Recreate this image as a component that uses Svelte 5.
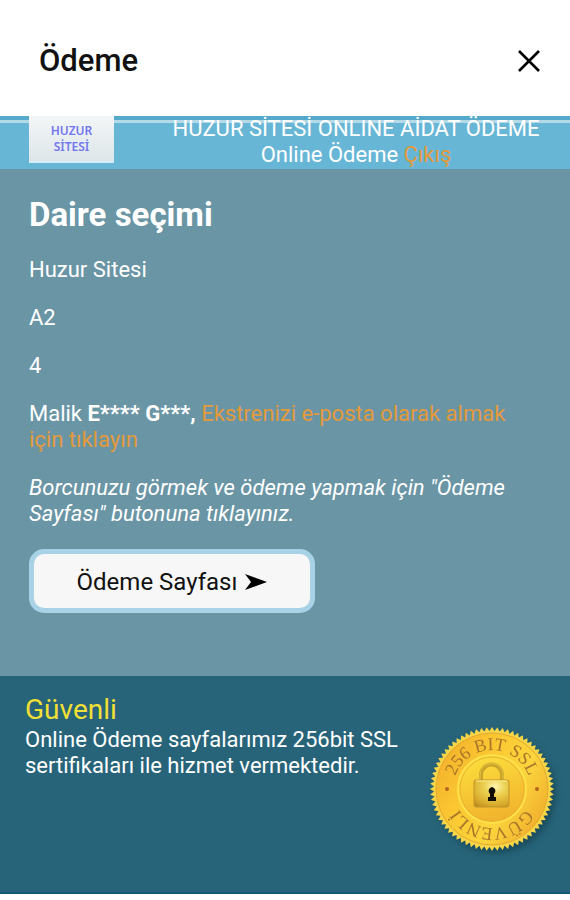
<script lang="ts">
    const site = 'Huzur Sitesi';
    const block = 'A2';
    const flat = '4';
    const owner = 'E**** G***';

    // serrated edge of the seal
    const teeth = 72;
    const sealEdge = Array.from({ length: teeth * 2 }, (_, i) => {
        const r = i % 2 ? 58 : 62;
        const a = (i * Math.PI) / teeth;
        return `${(r * Math.cos(a)).toFixed(2)},${(r * Math.sin(a)).toFixed(2)}`;
    }).join(' ');
</script>

<div class="page">
    <header class="title-bar">
        <h1>Ödeme</h1>
        <button class="close" type="button" aria-label="Kapat">
            <svg viewBox="0 0 24 24" width="24" height="24">
                <path d="M2 2 L22 22 M22 2 L2 22" stroke="#000" stroke-width="2.6" fill="none" />
            </svg>
        </button>
    </header>

    <div class="banner">
        <div class="logo">HUZUR<br />SİTESİ</div>
        <div class="banner-text">
            HUZUR SİTESİ ONLINE AİDAT ÖDEME<br />
            Online Ödeme <a href="#cikis">Çıkış</a>
        </div>
    </div>

    <main>
        <h2>Daire seçimi</h2>
        <p>{site}</p>
        <p>{block}</p>
        <p>{flat}</p>
        <p>Malik <b>{owner},</b> <a href="#ekstre">Ekstrenizi e-posta olarak almak için tıklayın</a></p>
        <p><em>Borcunuzu görmek ve ödeme yapmak için "Ödeme Sayfası" butonuna tıklayınız.</em></p>
        <button class="pay" type="button">
            Ödeme Sayfası
            <svg viewBox="0 0 22 18" width="22" height="18" aria-hidden="true">
                <path d="M0 1 L22 9 L0 17 L6 9 Z" fill="#000" />
            </svg>
        </button>
    </main>

    <footer>
        <div class="secure">
            <h3>Güvenli</h3>
            <p>Online Ödeme sayfalarımız 256bit SSL sertifikaları ile hizmet vermektedir.</p>
        </div>
        <svg class="seal" viewBox="-63 -63 126 126" width="126" height="126" role="img" aria-label="256 BIT SSL GÜVENLİ">
            <defs>
                <linearGradient id="gold" x1="0" y1="0.2" x2="1" y2="0.8">
                    <stop offset="0" stop-color="#f3b02c" />
                    <stop offset="0.35" stop-color="#fbc832" />
                    <stop offset="0.65" stop-color="#fbd53d" />
                    <stop offset="1" stop-color="#efaa2b" />
                </linearGradient>
                <linearGradient id="disc" x1="0" y1="0" x2="0.3" y2="1">
                    <stop offset="0" stop-color="#fde23f" />
                    <stop offset="1" stop-color="#f2b42d" />
                </linearGradient>
                <radialGradient id="lock" cx="0.6" cy="0.25" r="0.9">
                    <stop offset="0" stop-color="#fff6b0" />
                    <stop offset="0.35" stop-color="#ecd050" />
                    <stop offset="0.75" stop-color="#d8ab2c" />
                    <stop offset="1" stop-color="#b98a20" />
                </radialGradient>
                <path id="arc-top" d="M-36.7 13.3 A39 39 0 1 1 36.7 13.3" />
                <path id="arc-bottom" d="M39 0 A39 39 0 0 1 -39 0" />
            </defs>
            <polygon points={sealEdge} fill="#f6d548" />
            <circle r="56" fill="url(#gold)" stroke="#e3a92f" />
            <circle r="34" fill="url(#disc)" stroke="#fde04a" stroke-width="2" />
            <circle r="32" fill="none" stroke="#e9b331" />
            <text class="seal-text"><textPath href="#arc-top" startOffset="50%">256 BIT SSL</textPath></text>
            <text class="seal-text"><textPath href="#arc-bottom" startOffset="50%">GÜVENLİ</textPath></text>
            <circle cx="-45" r="2" fill="#b5661d" />
            <circle cx="45" r="2" fill="#b5661d" />
            <path d="M-11 -9 V-14 A10.5 10.5 0 0 1 10 -14 V-9" fill="none" stroke="#c9a32a" stroke-width="4" />
            <path d="M-12 -9 V-14 A11.5 11.5 0 0 1 11 -14 V-9" fill="none" stroke="#e2c33c" />
            <rect x="-18" y="-9" width="35" height="27" rx="2" fill="url(#lock)" stroke="#c0952a" />
            <path d="M-16 -8 H15" stroke="#fff19b" />
            <path d="M0 -2 A4 4 0 0 1 2 5 V8 H4 V12 H-4 V8 H-2 V5 A4 4 0 0 1 0 -2 Z" fill="#100c02" />
        </svg>
    </footer>
</div>

<style>
    :global(body) {
        margin: 0;
        background: #fff;
    }

    .page {
        font-family: Roboto, 'Liberation Sans', sans-serif;
        font-size: 22px;
        line-height: 26px;
        color: #fff;
    }

    h1, h2, h3, p {
        margin: 0;
    }

    a {
        color: #e39a3b;
        text-decoration: none;
    }

    .title-bar {
        display: flex;
        align-items: center;
        justify-content: space-between;
        height: 116px;
        padding: 5px 29px 0 39px;
        box-sizing: border-box;
        color: #111;
    }

    .title-bar h1 {
        font-size: 31px;
        line-height: 36px;
        font-weight: 500;
    }

    .close {
        display: flex;
        padding: 0;
        border: 0;
        background: none;
        cursor: pointer;
    }

    .banner {
        display: flex;
        gap: 28px;
        padding: 0 0 1px 29px;
        background: linear-gradient(#55aacb 0 4px, #b4d9e7 4px 7px, #68b6d6 7px);
    }

    .logo {
        width: 85px;
        height: 47px;
        padding-top: 7px;
        box-sizing: border-box;
        border-bottom: 2px solid #d3ecf5;
        background: linear-gradient(#f3f6f7, #dde6e9);
        color: #7376ee;
        font-family: 'Noto Sans', sans-serif;
        font-size: 12px;
        line-height: 16px;
        font-weight: 600;
        text-align: center;
    }

    .banner-text {
        flex: 1;
        padding: 0 28px;
        text-align: center;
    }

    main {
        padding: 26px 29px 63px;
        background: #6a95a5;
    }

    main h2 {
        font-size: 33px;
        line-height: 40px;
        font-weight: 700;
    }

    main p {
        margin-top: 22px;
    }

    .pay {
        display: flex;
        align-items: center;
        justify-content: center;
        gap: 8px;
        width: 286px;
        height: 64px;
        margin-top: 22px;
        padding: 2px 6px 0;
        border: 5px solid #a9d2e6;
        border-radius: 15px;
        background: #f7f7f7;
        color: #111;
        font-family: inherit;
        font-size: 24px;
        cursor: pointer;
    }

    footer {
        display: flex;
        justify-content: space-between;
        min-height: 218px;
        box-sizing: border-box;
        padding: 17px 15px 0 25px;
        border-bottom: 2px solid #14597a;
        background: #276479;
    }

    .secure h3 {
        font-size: 28px;
        line-height: 34px;
        font-weight: 400;
        color: #f0df35;
    }

    .secure p {
        max-width: 390px;
    }

    .seal {
        flex: none;
        margin-top: 33px;
        filter: drop-shadow(3px 4px 3px rgba(10, 45, 60, 0.5));
    }

    .seal-text {
        font-family: 'Liberation Serif', serif;
        font-size: 18px;
        fill: #a9752a;
        text-anchor: middle;
    }
</style>
